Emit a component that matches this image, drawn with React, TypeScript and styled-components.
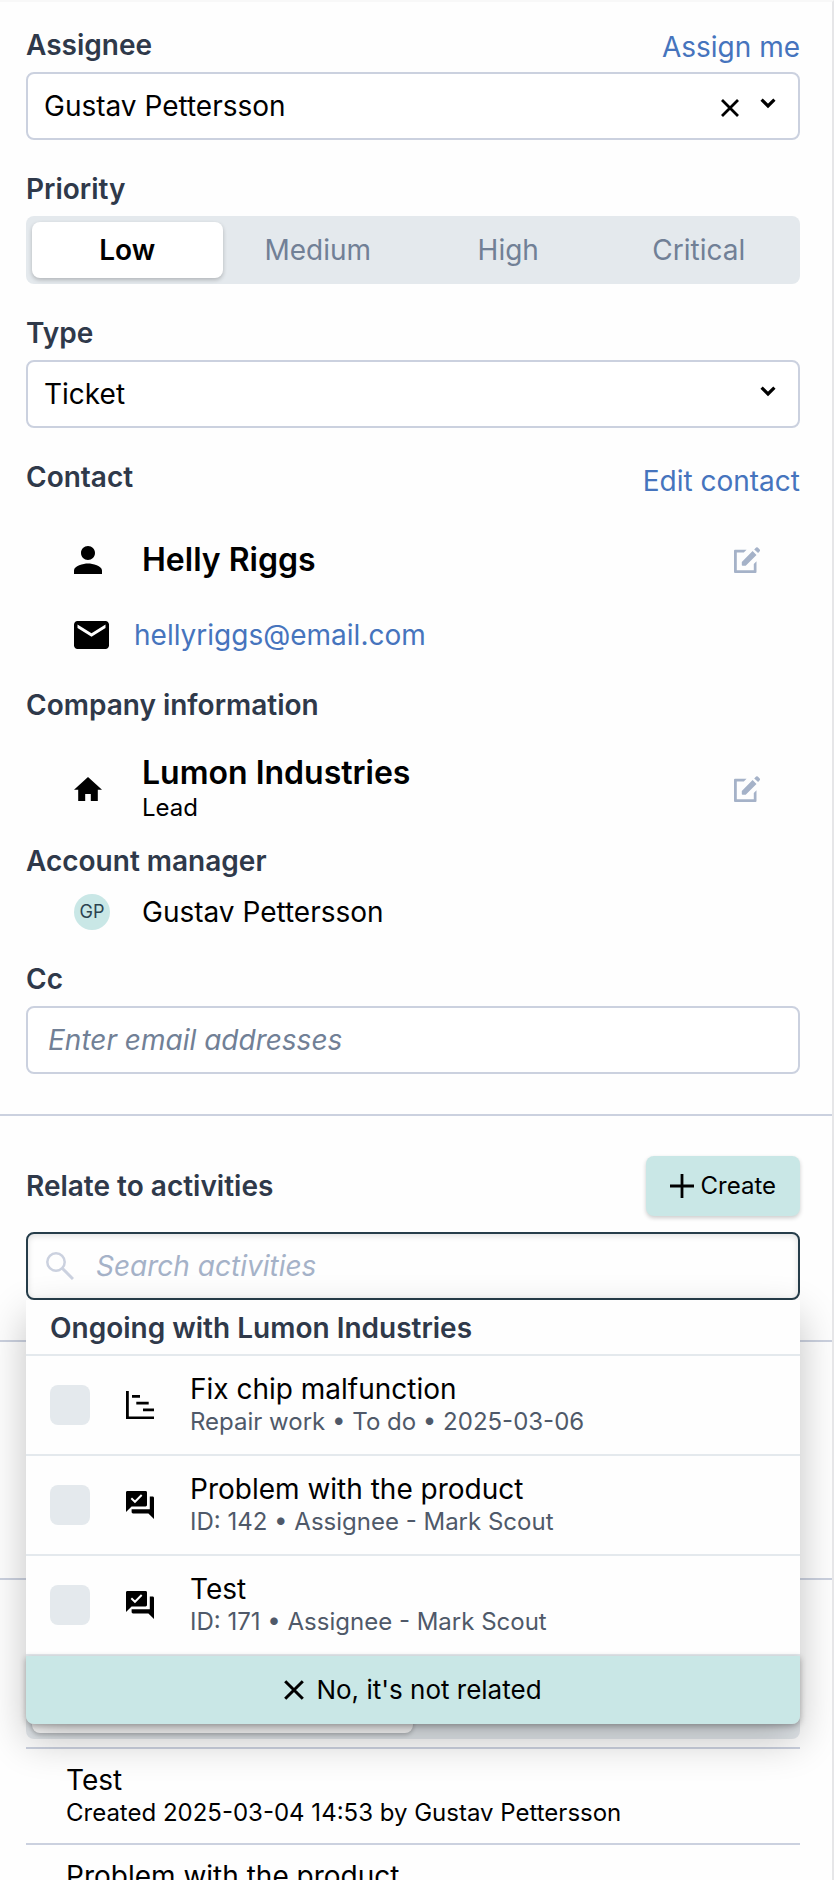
import React, { useState } from "react";
import styled, { createGlobalStyle, css } from "styled-components";

const color = {
  text: "#000000",
  label: "#2f394a",
  muted: "#4f5969",
  soft: "#718096",
  faint: "#a5b2c8",
  border: "#cbd1df",
  track: "#e4e9ed",
  link: "#4674bd",
  mint: "#c9e7e6",
  focus: "#263d4a",
};

const GlobalStyle = createGlobalStyle`
  *, *::before, *::after { box-sizing: border-box; }
  body {
    margin: 0;
    background: #ffffff;
    color: ${color.text};
    font-family: Inter, "Liberation Sans", sans-serif;
    font-size: 28px;
    line-height: 34px;
  }
  button, input, select { font: inherit; color: inherit; }
  button { border: 0; padding: 0; background: none; cursor: pointer; }
  h2, p, ul { margin: 0; padding: 0; }
  ul { list-style: none; }
`;

const Panel = styled.main`
  height: 100vh;
  overflow: hidden;
  background: #fefefe;
  border-top: 2px solid #f8f8f8;
  border-right: 2px solid #e6e6e8;
`;

const Section = styled.section<{ $first?: boolean }>`
  padding: ${(p) => (p.$first ? 26 : 40)}px 32px 40px 26px;
  border-bottom: 2px solid ${color.border};

  &:last-child { border-bottom: 0; }
`;

const EmptySlot = styled.div`
  height: 156px;
`;

const Field = styled.div<{ $after?: number }>`
  display: flex;
  flex-direction: column;
  margin-bottom: ${(p) => p.$after ?? 32}px;

  &:last-child { margin-bottom: 0; }
`;

const FieldHeader = styled.div<{ $height: number }>`
  display: flex;
  justify-content: space-between;
  height: ${(p) => p.$height}px;
`;

const labelText = css`
  display: block;
  color: ${color.label};
  font-size: 28px;
  font-weight: 600;
  line-height: 34px;
`;

const Label = styled.label`
  ${labelText}
`;

const Heading = styled.h2`
  ${labelText}
`;

const LinkButton = styled.button`
  align-self: flex-end;
  color: ${color.link};
`;

const Control = styled.div`
  display: grid;
  align-items: center;
  height: 68px;
  margin-top: 10px;
  border: 2px solid ${color.border};
  border-radius: 8px;
  background: #ffffff;
`;

const AssigneeControl = styled(Control)`
  margin-top: 8px;
`;

const Select = styled.select`
  grid-area: 1 / 1;
  width: 100%;
  height: 100%;
  padding: 0 96px 0 16px;
  border: 0;
  outline: 0;
  border-radius: 6px;
  background: transparent;
  appearance: none;
`;

const ControlIcons = styled.span`
  grid-area: 1 / 1;
  justify-self: end;
  display: flex;
  gap: 14px;
  padding-right: 18px;
  pointer-events: none;
`;

const IconButton = styled.button`
  display: flex;
  pointer-events: auto;
`;

const TextInput = styled.input`
  width: 100%;
  height: 100%;
  padding: 0 20px;
  border: 0;
  outline: 0;
  background: transparent;

  &::placeholder {
    color: ${color.soft};
    font-style: italic;
    opacity: 1;
  }
`;

const Track = styled.div<{ $cells: number }>`
  display: grid;
  grid-template-columns: repeat(${(p) => p.$cells}, 1fr);
  height: 68px;
  margin-top: 10px;
  padding: 6px;
  border-radius: 8px;
  background: ${color.track};
`;

const Segment = styled.button<{ $active: boolean }>`
  border-radius: 8px;
  color: ${(p) => (p.$active ? color.text : color.soft)};
  font-weight: ${(p) => (p.$active ? 600 : 400)};
  background: ${(p) => (p.$active ? "#ffffff" : "transparent")};
  box-shadow: ${(p) => (p.$active ? "0 2px 4px rgba(0, 0, 0, 0.22)" : "none")};
`;

const HistoryTabs = styled(Track)`
  margin: 51px 0 8px;
`;

const Entity = styled.div<{ $gap: number; $top: number }>`
  display: grid;
  grid-template-columns: auto 1fr auto;
  column-gap: ${(p) => p.$gap}px;
  align-items: center;
  margin-top: ${(p) => p.$top}px;
  padding: 0 40px 0 48px;
`;

const EntityName = styled.p`
  font-size: 32px;
  font-weight: 600;
  line-height: 38px;
`;

const EntityDetail = styled.p`
  font-size: 24px;
  line-height: 32px;
`;

const MailLink = styled.a`
  color: ${color.link};
  text-decoration: none;
`;

const Avatar = styled.span`
  display: grid;
  place-items: center;
  width: 36px;
  height: 36px;
  border-radius: 50%;
  background: ${color.mint};
  color: #2c4350;
  font-size: 18px;
  line-height: 22px;
`;

const RelateHeader = styled.div`
  display: flex;
  align-items: center;
  justify-content: space-between;
  margin-bottom: 16px;
`;

const CreateButton = styled.button`
  display: flex;
  align-items: center;
  gap: 7px;
  height: 60px;
  padding: 0 24px;
  border-radius: 8px;
  background: ${color.mint};
  box-shadow: 0 2px 4px rgba(0, 0, 0, 0.2);
  font-size: 24px;
  line-height: 30px;
`;

const SearchArea = styled.div`
  position: relative;
`;

const SearchBox = styled.div`
  display: flex;
  align-items: center;
  gap: 22px;
  height: 68px;
  padding: 0 18px;
  border: 2px solid ${color.focus};
  border-radius: 8px;
  box-shadow: inset 0 2px 6px rgba(0, 0, 0, 0.12);
`;

const SearchInput = styled(TextInput)`
  padding: 0;

  &::placeholder { color: ${color.faint}; }
`;

const Dropdown = styled.div`
  position: absolute;
  z-index: 2;
  top: 100%;
  left: 0;
  right: 0;
  border-radius: 0 0 8px 8px;
  background: #fefefe;
  box-shadow: 0 16px 40px rgba(0, 0, 0, 0.24);
`;

const DropdownTitle = styled.h2`
  ${labelText}
  padding: 11px 24px 9px;
  border-bottom: 2px solid ${color.track};
`;

const Option = styled.label`
  display: flex;
  align-items: center;
  gap: 36px;
  height: 100px;
  padding: 0 24px;
  border-bottom: 2px solid ${color.track};
  cursor: pointer;
`;

const Checkbox = styled.input`
  flex: none;
  width: 40px;
  height: 40px;
  margin: 0;
  border-radius: 8px;
  background: ${color.track};
  appearance: none;

  &:checked { background: ${color.focus}; }
`;

const ItemTitle = styled.span`
  display: block;
`;

const ItemDetail = styled.span<{ $muted?: boolean }>`
  display: block;
  color: ${(p) => (p.$muted ? color.muted : color.text)};
  font-size: 24px;
  line-height: 32px;
`;

const DismissButton = styled.button`
  display: flex;
  align-items: center;
  justify-content: center;
  gap: 12px;
  width: 100%;
  height: 68px;
  border-radius: 0 0 8px 8px;
  background: ${color.mint};
  box-shadow: 0 2px 6px rgba(0, 0, 0, 0.3);
  font-size: 26px;
`;

const HistoryItem = styled.li`
  padding: 14px 40px;
  border-top: 2px solid ${color.border};
`;

const Svg = styled.svg`
  display: block;
  flex: none;
`;

const ChevronIcon = () => (
  <Svg width="24" height="24" viewBox="0 0 24 24" fill="none" stroke="currentColor" strokeWidth="3.2" aria-hidden>
    <path d="M5.6 5.6 12 12l6.4-6.4" />
  </Svg>
);

const ClearIcon = () => (
  <Svg width="24" height="24" viewBox="0 0 24 24" fill="none" stroke="currentColor" strokeWidth="2.8" aria-hidden>
    <path d="M4 6 20 22M20 6 4 22" />
  </Svg>
);

const CrossIcon = () => (
  <Svg width="20" height="20" viewBox="0 0 20 20" fill="none" stroke="currentColor" strokeWidth="3" aria-hidden>
    <path d="M1.2 1.2 18.8 18.8M18.8 1.2 1.2 18.8" />
  </Svg>
);

const PlusIcon = () => (
  <Svg width="24" height="24" viewBox="0 0 24 24" fill="none" stroke="currentColor" strokeWidth="2.8" aria-hidden>
    <path d="M12 0v24M0 12h24" />
  </Svg>
);

const PersonIcon = () => (
  <Svg width="28" height="28" viewBox="4 4 16 16" aria-hidden>
    <path d="M12 12c2.21 0 4-1.79 4-4s-1.79-4-4-4-4 1.79-4 4 1.79 4 4 4zm0 2c-2.67 0-8 1.34-8 4v2h16v-2c0-2.66-5.33-4-8-4z" />
  </Svg>
);

const MailIcon = () => (
  <Svg width="35" height="28" viewBox="2 4 20 16" aria-hidden>
    <path d="M20 4H4c-1.1 0-1.99.9-1.99 2L2 18c0 1.1.9 2 2 2h16c1.1 0 2-.9 2-2V6c0-1.1-.9-2-2-2zm0 4-8 5-8-5V6l8 5 8-5v2z" />
  </Svg>
);

const HomeIcon = () => (
  <Svg width="28" height="24" viewBox="2 3 20 17" aria-hidden>
    <path d="M10 20v-5h4v5h5v-8h3L12 3 2 12h3v8z" />
  </Svg>
);

const EditIcon = () => (
  <Svg width="26" height="26" viewBox="0 0 26 26" fill={color.faint} aria-hidden>
    <path d="M1 2.8h11.6L9.8 5.4H2.8v17.8h17V17l2.7-2.7V25a1 1 0 0 1-1 1H1a1 1 0 0 1-1-1V3.8a1 1 0 0 1 1-1z" />
    <path d="M7.8 14.9 18.6 4.1l3.9 3.9-10.8 10.8H8.6a.8.8 0 0 1-.8-.8z" />
    <path d="M20.2 2.6 22.1.6a1.2 1.2 0 0 1 1.7 0l1.9 1.9a1.2 1.2 0 0 1 0 1.7l-1.6 1.7z" />
  </Svg>
);

const SearchIcon = () => (
  <Svg width="28" height="28" viewBox="0 0 28 28" fill="none" stroke={color.border} strokeWidth="2.5" aria-hidden>
    <circle cx="10" cy="10" r="8.7" />
    <path d="M16 16 27 27" strokeWidth="3" />
  </Svg>
);

const GanttIcon = () => (
  <Svg width="28" height="28" viewBox="0 0 28 28" aria-hidden>
    <path d="M0 0h2.8v25.4H28V28H0zM6 4h8v2.8H6zM10.3 10.7h12.4v2.8H10.3zM17 17.4h11v2.8H17z" />
  </Svg>
);

const ChatIcon = () => (
  <Svg width="28" height="28" viewBox="2 2 20 20" aria-hidden>
    <path d="M21 6h-2v9H6v2c0 .55.45 1 1 1h11l4 4V7c0-.55-.45-1-1-1zm-4 6V3c0-.55-.45-1-1-1H3c-.55 0-1 .45-1 1v14l4-4h10c.55 0 1-.45 1-1z" />
    <path d="M5.8 7.2 8.4 9.7 13.2 4.9" fill="none" stroke="#fff" strokeWidth="1.4" />
  </Svg>
);

const priorities = ["Low", "Medium", "High", "Critical"];

const activities = [
  { title: "Fix chip malfunction", detail: "Repair work • To do • 2025-03-06", icon: GanttIcon },
  { title: "Problem with the product", detail: "ID: 142 • Assignee - Mark Scout", icon: ChatIcon },
  { title: "Test", detail: "ID: 171 • Assignee - Mark Scout", icon: ChatIcon },
];

export default function App() {
  const [priority, setPriority] = useState("Low");
  const [assignee, setAssignee] = useState("Gustav Pettersson");
  const [open, setOpen] = useState(true);

  return (
    <>
      <GlobalStyle />
      <Panel>
        <Section $first>
          <Field>
            <FieldHeader $height={36}>
              <Label htmlFor="assignee">Assignee</Label>
              <LinkButton type="button" onClick={() => setAssignee("Gustav Pettersson")}>Assign me</LinkButton>
            </FieldHeader>
            <AssigneeControl>
              <Select id="assignee" value={assignee} onChange={(e) => setAssignee(e.target.value)}>
                <option value="" />
                <option>Gustav Pettersson</option>
              </Select>
              <ControlIcons>
                <IconButton type="button" aria-label="Clear assignee" onClick={() => setAssignee("")}>
                  <ClearIcon />
                </IconButton>
                <ChevronIcon />
              </ControlIcons>
            </AssigneeControl>
          </Field>

          <Field>
            <Heading id="priority">Priority</Heading>
            <Track $cells={4} role="group" aria-labelledby="priority">
              {priorities.map((name) => (
                <Segment
                  key={name}
                  type="button"
                  $active={name === priority}
                  aria-pressed={name === priority}
                  onClick={() => setPriority(name)}
                >
                  {name}
                </Segment>
              ))}
            </Track>
          </Field>

          <Field>
            <Label htmlFor="type">Type</Label>
            <Control>
              <Select id="type" defaultValue="Ticket">
                <option>Ticket</option>
              </Select>
              <ControlIcons>
                <ChevronIcon />
              </ControlIcons>
            </Control>
          </Field>

          <Field $after={36}>
            <FieldHeader $height={38}>
              <Heading>Contact</Heading>
              <LinkButton type="button">Edit contact</LinkButton>
            </FieldHeader>
            <Entity $gap={40} $top={43}>
              <PersonIcon />
              <EntityName>Helly Riggs</EntityName>
              <IconButton type="button" aria-label="Edit Helly Riggs"><EditIcon /></IconButton>
            </Entity>
            <Entity $gap={25} $top={39}>
              <MailIcon />
              <MailLink href="mailto:hellyriggs@email.com">hellyriggs@email.com</MailLink>
            </Entity>
          </Field>

          <Field $after={20}>
            <Heading>Company information</Heading>
            <Entity $gap={40} $top={32}>
              <HomeIcon />
              <div>
                <EntityName>Lumon Industries</EntityName>
                <EntityDetail>Lead</EntityDetail>
              </div>
              <IconButton type="button" aria-label="Edit Lumon Industries"><EditIcon /></IconButton>
            </Entity>
          </Field>

          <Field>
            <Heading>Account manager</Heading>
            <Entity $gap={32} $top={16}>
              <Avatar>GP</Avatar>
              <p>Gustav Pettersson</p>
            </Entity>
          </Field>

          <Field>
            <Label htmlFor="cc">Cc</Label>
            <Control>
              <TextInput id="cc" type="text" placeholder="Enter email addresses" />
            </Control>
          </Field>
        </Section>

        <Section>
          <RelateHeader>
            <Label htmlFor="activity-search">Relate to activities</Label>
            <CreateButton type="button"><PlusIcon />Create</CreateButton>
          </RelateHeader>
          <SearchArea>
            <SearchBox>
              <SearchIcon />
              <SearchInput
                id="activity-search"
                type="text"
                placeholder="Search activities"
                onFocus={() => setOpen(true)}
              />
            </SearchBox>
            {open && (
              <Dropdown>
                <DropdownTitle>Ongoing with Lumon Industries</DropdownTitle>
                {activities.map(({ title, detail, icon: Icon }) => (
                  <Option key={title}>
                    <Checkbox type="checkbox" />
                    <Icon />
                    <span>
                      <ItemTitle>{title}</ItemTitle>
                      <ItemDetail $muted>{detail}</ItemDetail>
                    </span>
                  </Option>
                ))}
                <DismissButton type="button" onClick={() => setOpen(false)}>
                  <CrossIcon />No, it's not related
                </DismissButton>
              </Dropdown>
            )}
          </SearchArea>
        </Section>

        <Section>
          <EmptySlot />
        </Section>

        <Section>
          <HistoryTabs $cells={2} role="group" aria-label="History">
            <Segment type="button" $active aria-label="Created" />
            <Segment type="button" $active={false} aria-label="Closed" />
          </HistoryTabs>
          <ul>
            <HistoryItem>
              <ItemTitle>Test</ItemTitle>
              <ItemDetail>Created 2025-03-04 14:53 by Gustav Pettersson</ItemDetail>
            </HistoryItem>
            <HistoryItem>
              <ItemTitle>Problem with the product</ItemTitle>
            </HistoryItem>
          </ul>
        </Section>
      </Panel>
    </>
  );
}
